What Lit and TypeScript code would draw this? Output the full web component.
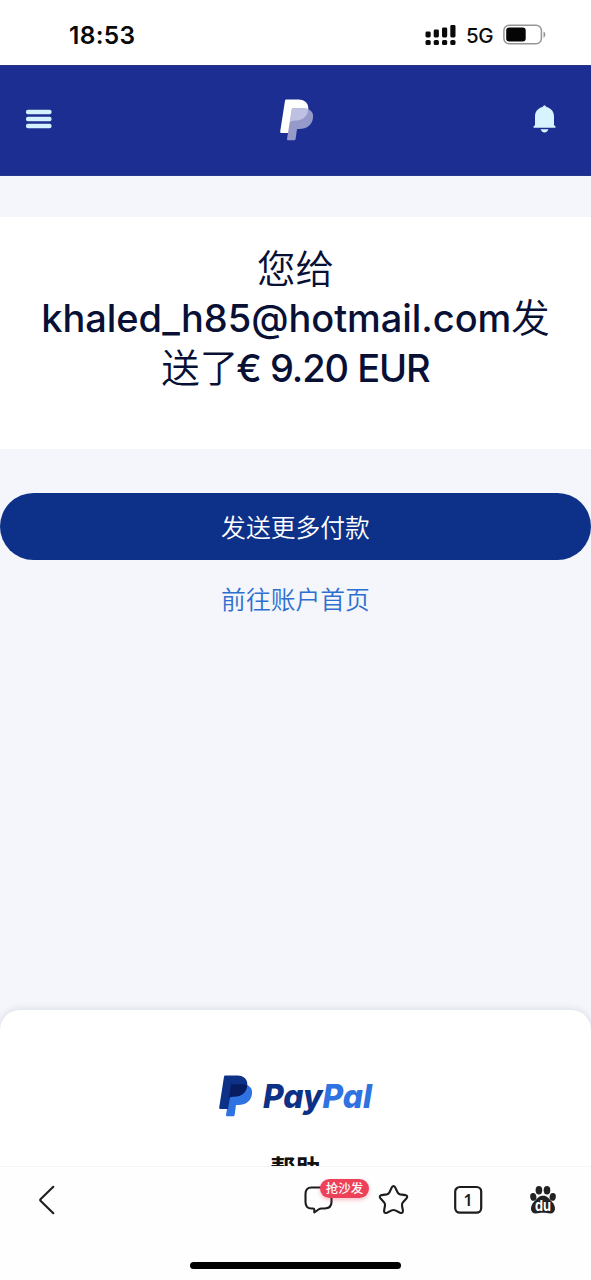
import { LitElement, html, css } from "lit";
import { customElement } from "lit/decorators.js";

@customElement("status-bar")
class StatusBar extends LitElement {
  static styles = css`
    :host { display: flex; height: 65px; background: #fff; box-sizing: border-box; padding: 4px 45px 0 69px; align-items: center; justify-content: space-between; font-family: Inter, sans-serif; color: #0a0a0a; }
    .time { font-size: 24.500px; font-weight: 600; line-height: 30px; letter-spacing: 0.3px; padding-top: 1px; }
    .right { display: flex; align-items: center; }
    .net { font-size: 20.500px; font-weight: 450; margin-left: 10px; margin-right: 10px; line-height: 24px; padding-top: 2px; width: 27px; letter-spacing: -0.3px; }
    svg { display: block; }
  `;
  render() {
    return html`
      <span class="time">18:53</span>
      <div class="right">
        <svg width="31" height="22" viewBox="0 0 31 22" fill="#0a0a0a">
          <rect x="0.5" y="7.500" width="5.200" height="6" rx="1.400"/><rect x="8.700" y="5.500" width="5.200" height="8" rx="1.400"/>
          <rect x="17" y="3.500" width="5.200" height="10" rx="1.400"/><rect x="25.300" y="1" width="5.200" height="12.500" rx="1.400"/>
          <rect x="0.5" y="16" width="5.200" height="5" rx="1.600"/><rect x="8.700" y="16" width="5.200" height="5" rx="1.600"/>
          <rect x="17" y="16" width="5.200" height="5" rx="1.600"/><rect x="25.300" y="16" width="5.200" height="5" rx="1.600"/>
        </svg>
        <span class="net">5G</span>
        <svg width="43" height="22" viewBox="0 0 43 22">
          <rect x="0.9" y="1.200" width="37.500" height="18.600" rx="5.200" fill="none" stroke="#969696" stroke-width="1.500"/>
          <rect x="3.200" y="3.600" width="19.500" height="13.800" rx="3" fill="#050505"/>
          <path d="M40.500 7.500c2.400.8 2.400 5.400 0 6.200z" fill="#969696"/>
        </svg>
      </div>`;
  }
}

@customElement("top-nav")
class TopNav extends LitElement {
  static styles = css`
    :host { display: flex; height: 111px; box-sizing: border-box; background: #1c2e91; border-top: 1px solid #2b3680; border-bottom: 1px solid #24378f; padding: 0 35.500px 2px 26px; align-items: center; justify-content: space-between; }
    svg { display: block; }
    .menu, .bell { margin-bottom: 1px; }
    .mark { margin-left: 9px; }
  `;
  render() {
    return html`
      <svg class="menu" width="26" height="20" viewBox="0 0 26 20" fill="#d3f1ff">
        <rect x="0" y="0.7" width="25.500" height="4.600" rx="1.800"/><rect x="0" y="7.700" width="25.500" height="4.600" rx="1.800"/><rect x="0" y="14.700" width="25.500" height="4.600" rx="1.800"/>
      </svg>
      <svg class="mark" width="34" height="42" viewBox="0 0 34 42">
        <path d="M6.200.5H18.500C25 .5 29.300 5 28.200 11 27 18.500 21.500 21.500 15 21.500H11.200L9 34H1.500Q0 34 .2 32.500L5 1.700Q5.200.5 6.200.5Z" fill="#fff"/>
        <path d="M12 9.200H23C30 9.200 34 13 33 19 31.800 26.500 26.500 30 19.500 30H17L15.600 40Q15.400 41.300 14.200 41.300H8Q6.800 41.300 7 40Z" fill="#959acb"/>
        <path d="M12 9.200H23Q26 9.200 28.300 10.200C27.400 18.200 22 21.500 15 21.500Q12 21.500 10 23Z" fill="#bfc1e2"/>
      </svg>
      <svg class="bell" width="23" height="28" viewBox="0 0 23 28" fill="#d6f3ff">
        <path d="M11.500.3Q12.400.3 13.500 2.100C18.500 3.500 21 7 21 11.500V20L22.500 21.500V22.800H.5V21.500L2 20V11.500C2 7 4.500 3.500 9.500 2.100Q10.600.3 11.500.3Z"/>
        <path d="M7.600 24.300H15.400Q14.500 27.400 11.500 27.400T7.600 24.300Z"/>
      </svg>`;
  }
}

@customElement("browser-bar")
class BrowserBar extends LitElement {
  static styles = css`
    :host { display: flex; flex-direction: column; height: 114px; box-sizing: border-box; background: #fefefe; border-top: 1px solid #f5f5f5; align-items: center; justify-content: space-between; padding-bottom: 11px; }
    .row { display: flex; align-items: center; width: 100%; height: 66px; box-sizing: border-box; padding: 0 32px 0 38px; }
    .spacer { flex: 1; }
    .tools { display: flex; align-items: center; gap: 43px; }
    .chat { position: relative; width: 32px; height: 32px; }
    .badge { position: absolute; left: 17px; top: -5px; width: 49px; height: 19px; border-radius: 10px; background: #ec4159; color: #fff; font: 500 12.500px/18px "Noto Sans CJK SC", sans-serif; text-align: center; box-shadow: 0 2px 4px #ec415955; }
    svg { display: block; }
    .num { font: 600 16px "Noto Sans", sans-serif; }
    .du { font: 700 15px Inter, sans-serif; }
    .home { width: 211px; height: 7px; border-radius: 4px; background: #000; }
  `;
  render() {
    return html`
      <div class="row">
        <svg width="18" height="30" viewBox="0 0 18 30" fill="none" stroke="#1c1c1c" stroke-width="2.100" stroke-linecap="round" stroke-linejoin="round"><path d="M15.300 1.800 2.500 14.200Q1.700 15 2.500 15.800L15.300 28.200"/></svg>
        <div class="spacer"></div>
        <div class="tools">
          <div class="chat">
            <svg width="32" height="32" viewBox="0 0 32 32" fill="none" stroke="#1c1c1c" stroke-width="2.100" stroke-linejoin="round" stroke-linecap="round"><path d="M8.500 3.500H21.500Q28.500 3.500 28.500 10V18Q28.500 24.500 21.500 24.500H18.500Q17 24.500 15.500 25.500L11.300 28.500V25.800Q11.300 24.500 10 24.500H8.500Q2.500 24.500 2.500 18V10Q2.500 3.500 8.500 3.500Z"/></svg>
            <span class="badge">抢沙发</span>
          </div>
          <svg width="31" height="32" viewBox="0 0 31 32" fill="none" stroke="#1c1c1c" stroke-width="2.100" stroke-linejoin="round"><path d="M13.800 3.400Q15.500.7 17.200 3.400L19.500 8.300Q20.300 10 22.200 10.400L27.300 11.100Q30.500 11.900 28.400 14.500L25 18.200Q23.700 19.600 24 21.500L24.900 26.500Q25.100 29.900 22 28.700L17.300 26.400Q15.500 25.500 13.700 26.400L9 28.700Q5.900 29.900 6.100 26.500L7 21.500Q7.300 19.600 6 18.200L2.600 14.500Q.5 11.900 3.700 11.100L8.800 10.400Q10.700 10 11.500 8.300Z"/></svg>
          <svg width="32" height="32" viewBox="0 0 32 32"><rect x="3.200" y="3" width="26" height="25.700" rx="4.600" fill="none" stroke="#1c1c1c" stroke-width="2.200"/><text class="num" x="16" y="21.500" text-anchor="middle" fill="#1c1c1c">1</text></svg>
          <svg width="32" height="32" viewBox="0 0 32 32" fill="#222">
            <ellipse cx="11.900" cy="6.200" rx="3.300" ry="4.200"/><ellipse cx="20" cy="6.200" rx="3.300" ry="4.200"/>
            <ellipse cx="6.300" cy="12.900" rx="3.100" ry="3.900" transform="rotate(-10 6.300 12.900)"/><ellipse cx="25.700" cy="12.900" rx="3.100" ry="3.900" transform="rotate(10 25.700 12.900)"/>
            <path d="M16 11.800C20.500 11.800 21.500 14.500 24.500 17.200 30 22.500 28.500 29.500 23.500 29.500 20.500 29.500 19 28.800 16 28.800S11.500 29.500 8.500 29.500C3.500 29.500 2 22.500 7.500 17.200 10.500 14.500 11.500 11.800 16 11.800Z"/>
            <text class="du" x="16" y="27" text-anchor="middle" textLength="16" lengthAdjust="spacingAndGlyphs" fill="#fff">du</text>
          </svg>
        </div>
      </div>
      <div class="home"></div>`;
  }
}

@customElement("app-root")
class AppRoot extends LitElement {
  static styles = css`
    :host { display: flex; flex-direction: column; width: 591px; height: 1280px; overflow: hidden; background: #f4f6fb; font-family: "Noto Sans CJK SC", sans-serif; }
    .card { background: #fff; margin-top: 41px; height: 232px; box-sizing: border-box; padding-top: 24.500px; }
    h1 { margin: 0; font-size: 38.500px; line-height: 49.500px; font-weight: 350; color: #081036; text-align: center; display: flex; flex-direction: column; align-items: center; }
    .line { display: block; height: 49.500px; white-space: nowrap; }
    .latin { font-family: Inter, sans-serif; font-size: 38px; font-weight: 500; }
    .mail { letter-spacing: -0.05px; }
    .sum { letter-spacing: -1.050px; margin-left: -2px; }
    .actions { display: flex; flex-direction: column; align-items: center; margin-top: 44px; flex: 1; }
    .primary { width: 100%; height: 67px; border: 0; border-radius: 34px; background: #0d3189; color: #fff; font: 350 24.800px/36px "Noto Sans CJK SC", sans-serif; padding: 0 0 2px; }
    .link { margin-top: 20px; color: #2d6fd0; font-size: 24.800px; font-weight: 350; line-height: 36px; text-decoration: none; }
    .footer { height: 156px; box-sizing: border-box; background: #fff; border-radius: 20px 20px 0 0; box-shadow: 0 0 8px #282d5026; padding-top: 65px; display: flex; flex-direction: column; align-items: center; overflow: hidden; }
    .logo { display: block; flex: none; overflow: visible; }
    .word { font: italic 800 33px Inter, sans-serif; font-feature-settings: "cv11" 1; }
    .help { font-size: 25px; line-height: 36px; font-weight: 700; color: #111; margin-top: 32px; flex: none; }
  `;
  render() {
    return html`
      <status-bar></status-bar>
      <top-nav></top-nav>
      <section class="card">
        <h1>
          <span class="line">您给</span>
          <span class="line"><span class="latin mail">khaled_h85@hotmail.com</span>发</span>
          <span class="line">送了<span class="latin sum">€ 9.20 EUR</span></span>
        </h1>
      </section>
      <section class="actions">
        <button class="primary">发送更多付款</button>
        <a class="link">前往账户首页</a>
      </section>
      <footer class="footer">
        <svg class="logo" width="154" height="42" viewBox="0 0 154 42">
          <path d="M9.500 9.200H23C30 9.200 34 13 33 19 31.800 26.500 26.500 30 19.500 30H17L15.600 40Q15.400 41.300 14.200 41.300H8Q6.800 41.300 7 40L9 28Z" fill="#2f72e2"/>
          <path d="M6.200.5H18.500C25 .5 29.300 5 28.200 11 27 18.500 21.500 21.500 15 21.500H11.200L9 34H1.500Q0 34 .2 32.500L5 1.700Q5.200.5 6.200.5Z" fill="#0c3186"/>
          <path d="M12 9.200H23Q26 9.200 28.300 10.200C27.400 18.200 22 21.500 15 21.500Q12 21.500 10 23Z" fill="#081d61"/>
          <text class="word" x="44" y="33" textLength="109" lengthAdjust="spacingAndGlyphs" fill="#0c3186">Pay<tspan fill="#2f72e2">Pal</tspan></text>
        </svg>
        <span class="help">帮助</span>
      </footer>
      <browser-bar></browser-bar>`;
  }
}
